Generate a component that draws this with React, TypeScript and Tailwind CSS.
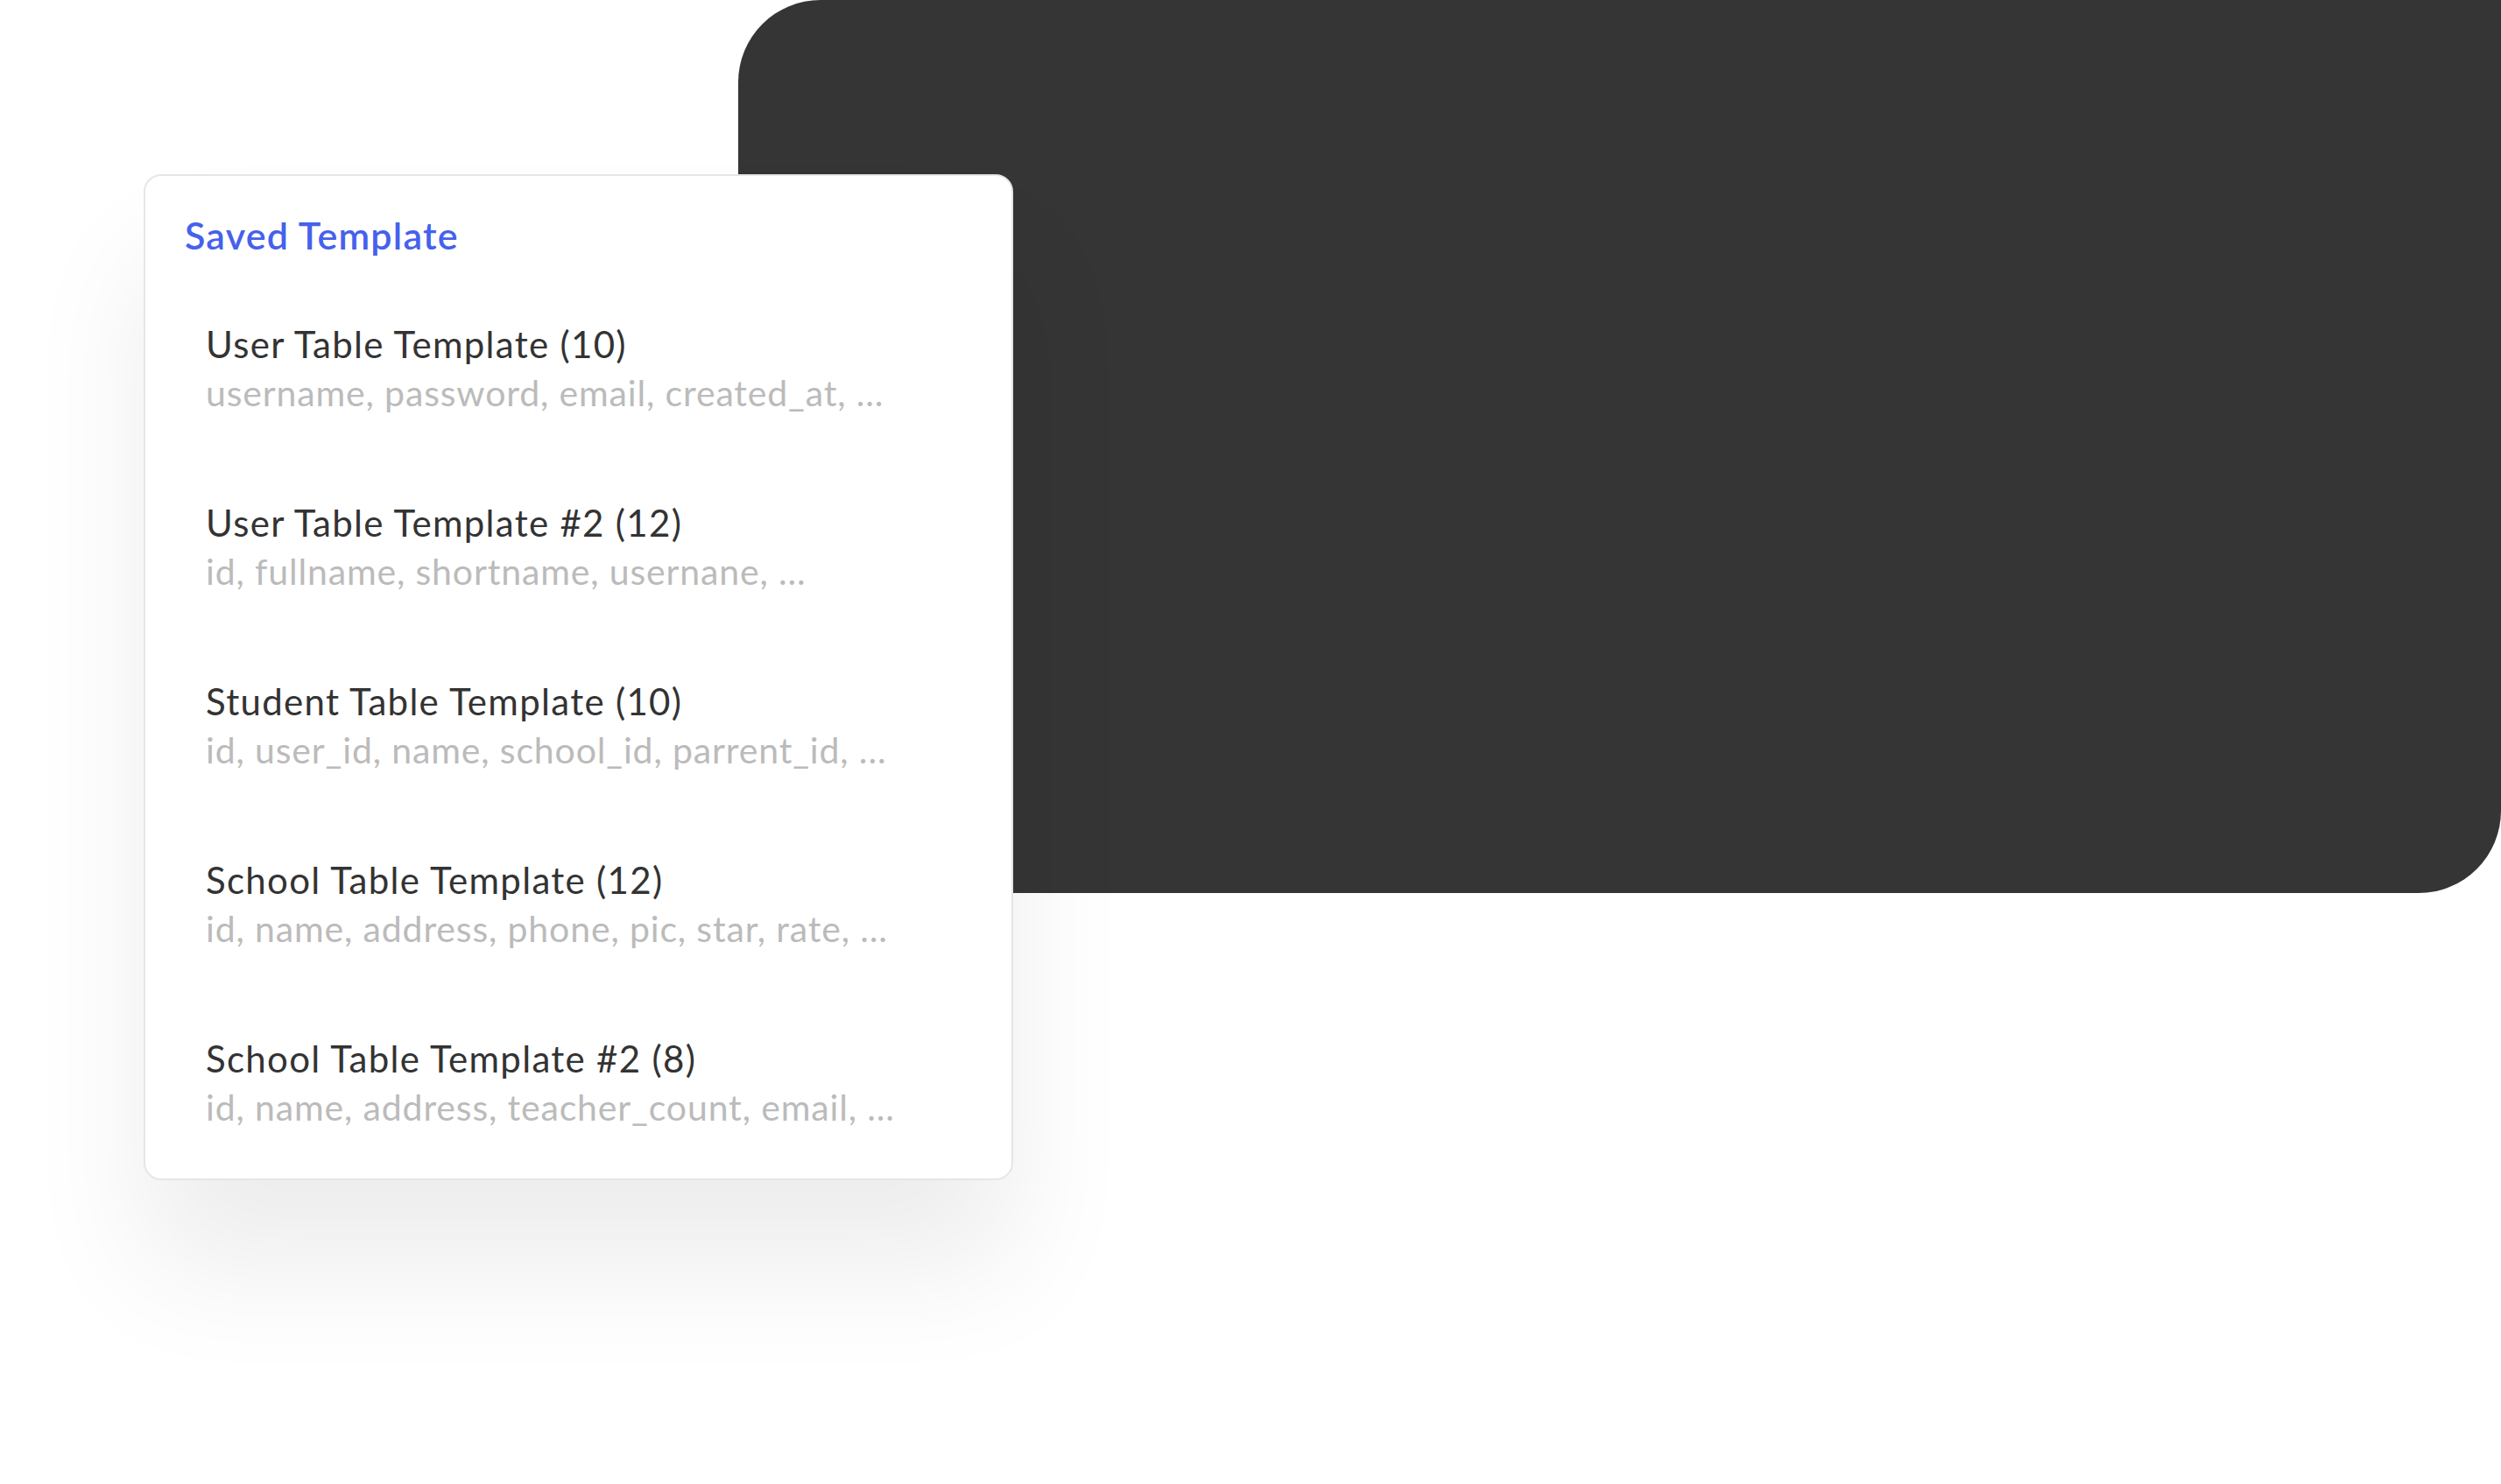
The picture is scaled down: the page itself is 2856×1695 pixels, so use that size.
import React from "react";

const items = [
  { title: "User Table Template (10)", fields: "username, password, email, created_at, ..." },
  { title: "User Table Template #2 (12)", fields: "id, fullname, shortname, usernane, ..." },
  { title: "Student Table Template (10)", fields: "id, user_id, name, school_id, parrent_id, ..." },
  { title: "School Table Template (12)", fields: "id, name, address, phone, pic, star, rate, ..." },
  { title: "School Table Template #2 (8)", fields: "id, name, address, teacher_count, email, ..." },
];

export default function App() {
  return (
    <div
      className="relative w-[2856px] h-[1695px] overflow-hidden bg-white"
      style={{ fontFamily: "Lato, 'Noto Sans', sans-serif" }}
    >
      <div className="pl-[843px]">
        <div className="h-[1020px] bg-[#353535] rounded-tl-[94px] rounded-br-[94px]" />
      </div>

      <div className="absolute left-[164px] top-[199px] w-[993px] h-[1149px] rounded-[20px] border-2 border-[#e6e6e6] bg-white shadow-[0_100px_140px_rgba(0,0,0,0.075)] pt-[40px] pl-[45px] pr-[40px]">
        <h2 className="text-[43px] leading-[56px] font-semibold tracking-[1.2px] text-[#4661ec]">Saved Template</h2>
        <ul className="mt-[68px]">
          {items.map((it) => (
            <li key={it.title} className="px-[24px] pb-[92px]">
              <div className="text-[42px] leading-[56px] tracking-[1.3px] text-[#333333]">{it.title}</div>
              <div className="text-[41px] leading-[56px] tracking-[0.85px] text-[#bbbbbb]">{it.fields}</div>
            </li>
          ))}
        </ul>
      </div>
    </div>
  );
}
